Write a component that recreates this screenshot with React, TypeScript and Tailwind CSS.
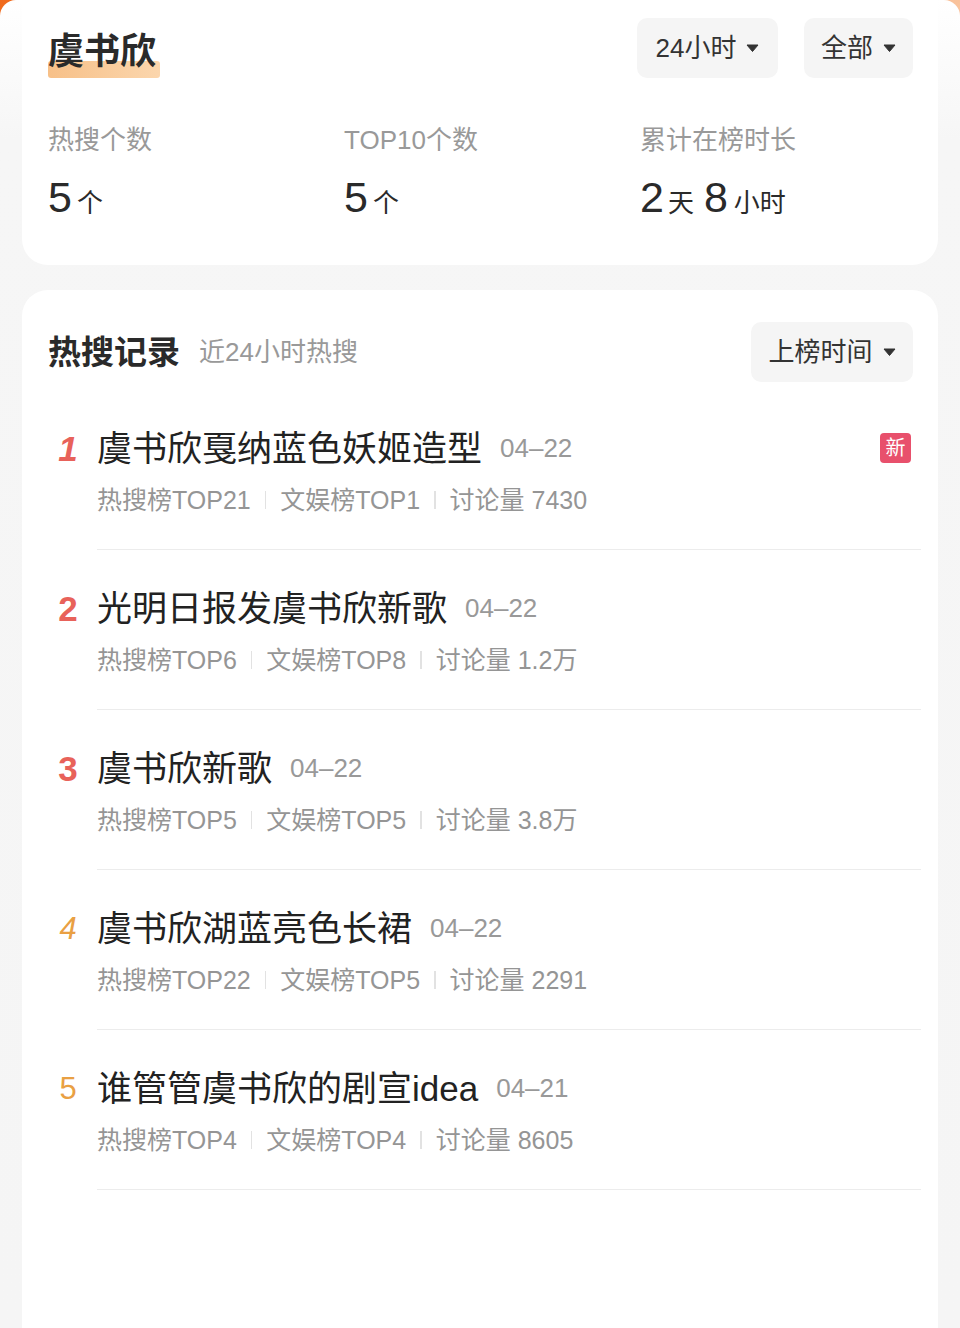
import React from "react";

const FONT = '"Liberation Sans", "Noto Sans CJK SC", sans-serif';

function Caret() {
  return (
    <svg width="13" height="8" viewBox="0 0 13 8" className="ml-[10px] shrink-0">
      <path d="M1 1 L12 1 L6.5 7.5 Z" fill="#333" stroke="#333" strokeWidth="1" strokeLinejoin="round" />
    </svg>
  );
}

function Pill({ label, className = "" }: { label: string; className?: string }) {
  return (
    <div className={`flex h-[60px] items-center justify-center rounded-[10px] bg-[#f5f5f5] text-[26px] text-[#333] ${className}`}>
      <span className="leading-none">{label}</span>
      <Caret />
    </div>
  );
}

type Item = {
  rank: number;
  title: string;
  date: string;
  hot: string;
  ent: string;
  talk: string;
  isNew?: boolean;
};

const items: Item[] = [
  { rank: 1, title: "虞书欣戛纳蓝色妖姬造型", date: "04–22", hot: "热搜榜TOP21", ent: "文娱榜TOP1", talk: "讨论量 7430", isNew: true },
  { rank: 2, title: "光明日报发虞书欣新歌", date: "04–22", hot: "热搜榜TOP6", ent: "文娱榜TOP8", talk: "讨论量 1.2万" },
  { rank: 3, title: "虞书欣新歌", date: "04–22", hot: "热搜榜TOP5", ent: "文娱榜TOP5", talk: "讨论量 3.8万" },
  { rank: 4, title: "虞书欣湖蓝亮色长裙", date: "04–22", hot: "热搜榜TOP22", ent: "文娱榜TOP5", talk: "讨论量 2291" },
  { rank: 5, title: "谁管管虞书欣的剧宣idea", date: "04–21", hot: "热搜榜TOP4", ent: "文娱榜TOP4", talk: "讨论量 8605" },
];

function Rank({ n }: { n: number }) {
  if (n === 1)
    return <span className="text-[35px] font-bold italic text-[#e8625a]">1</span>;
  if (n === 2 || n === 3)
    return <span className="text-[35px] font-bold text-[#e8625a]">{n}</span>;
  if (n === 4)
    return <span className="text-[31px] italic text-[#e9a043]">4</span>;
  return <span className="text-[31px] text-[#e9a043]">{n}</span>;
}

function Sep() {
  return <span className="mx-[14px] inline-block h-[18px] w-[1.5px] bg-[#e2e2e2]" />;
}

function Big({ children, className = "" }: { children: React.ReactNode; className?: string }) {
  return <span className={`text-[43px] font-medium ${className}`}>{children}</span>;
}

function Unit({ children, className = "" }: { children: React.ReactNode; className?: string }) {
  return <span className={`text-[26px] ${className}`}>{children}</span>;
}

export default function App() {
  const stats = [
    { label: "热搜个数", value: <><Big>5</Big><Unit className="ml-[5px]">个</Unit></> },
    { label: "TOP10个数", value: <><Big>5</Big><Unit className="ml-[5px]">个</Unit></> },
    {
      label: "累计在榜时长",
      value: (
        <>
          <Big>2</Big>
          <Unit className="ml-[4px]">天</Unit>
          <Big className="ml-[10px]">8</Big>
          <Unit className="ml-[6px]">小时</Unit>
        </>
      ),
    },
  ];

  return (
    <div
      className="relative h-[1328px] w-[960px] overflow-hidden bg-[linear-gradient(135deg,#f06a1c,#f59a5a_30%,#ffffff_60%)]"
      style={{ fontFamily: FONT }}
    >
      <div className="h-full rounded-t-[16px] bg-[linear-gradient(to_bottom,#ffffff_0px,#f6f6f6_140px,#f5f5f5)] px-[22px]">
        {/* Card 1 */}
        <div className="rounded-b-[26px] bg-white pt-[18px] pb-[42px] pl-[26px] pr-[25px]">
          <div className="flex h-[60px] items-center">
            <div className="relative mt-[8px]">
              <span className="absolute bottom-[-7px] left-0 h-[17px] w-[112px] rounded-[3px] bg-[linear-gradient(to_right,#f7c088,#fbd6ad)]" />
              <span className="relative text-[36px] font-bold leading-none text-[#2a2a2a]">虞书欣</span>
            </div>
            <div className="ml-auto flex gap-[26px]">
              <Pill label="24小时" className="w-[141px]" />
              <Pill label="全部" className="w-[109px]" />
            </div>
          </div>
          <div className="mt-[44px] grid grid-cols-[296px_296px_1fr]">
            {stats.map((s) => (
              <div key={s.label}>
                <div className="h-[36px] text-[26px] leading-[36px] text-[#999]">{s.label}</div>
                <div className="mt-[18px] flex h-[47px] items-baseline leading-none text-[#2a2a2a]">{s.value}</div>
              </div>
            ))}
          </div>
        </div>

        {/* Card 2 */}
        <div className="mt-[25px] min-h-[1100px] rounded-t-[26px] bg-white pt-[32px] pl-[26px] pr-[17px]">
          <div className="flex h-[60px] items-center pr-[8px]">
            <span className="text-[33px] font-bold leading-none text-[#2a2a2a]">热搜记录</span>
            <span className="ml-[19px] text-[26px] leading-none text-[#999]">近24小时热搜</span>
            <Pill label="上榜时间" className="ml-auto w-[162px]" />
          </div>
          <div className="mt-[8px]">
            {items.map((it) => (
              <div key={it.rank} className="flex">
                <div className="flex w-[49px] shrink-0 justify-center pr-[9px] pt-[36px]">
                  <div className="flex h-[44px] items-center leading-none">
                    <Rank n={it.rank} />
                  </div>
                </div>
                <div className="flex-1 border-b border-[#ececec] pt-[36px] pb-[31px]">
                  <div className="flex h-[44px] items-center">
                    <span className="text-[35px] leading-none text-[#222]">{it.title}</span>
                    <span className="ml-[18px] text-[26px] leading-none text-[#999]">{it.date}</span>
                    {it.isNew && (
                      <span className="ml-auto mr-[10px] flex h-[30px] w-[31px] items-center justify-center rounded-[4px] bg-[#e8506c] text-[20px] leading-none text-white">
                        新
                      </span>
                    )}
                  </div>
                  <div className="mt-[12px] flex h-[36px] items-center text-[25px] leading-none text-[#959595]">
                    <span>{it.hot}</span>
                    <Sep />
                    <span>{it.ent}</span>
                    <Sep />
                    <span>{it.talk}</span>
                  </div>
                </div>
              </div>
            ))}
          </div>
        </div>
      </div>
    </div>
  );
}
